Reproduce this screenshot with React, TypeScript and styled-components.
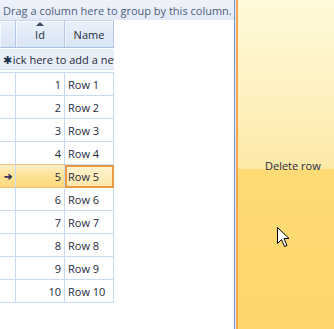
import { createGlobalStyle } from "styled-components";
import styled from "styled-components";

const GlobalStyle = createGlobalStyle`
  html, body {
    margin: 0;
    padding: 0;
    background: #ffffff;
  }

  body {
    font-family: "Open Sans", "Noto Sans", sans-serif;
    font-size: 11px;
    color: #1e2a3c;
  }
`;

export const Screen = styled.div`
  display: flex;
  width: 334px;
  height: 329px;
  overflow: hidden;
`;

export const GridArea = styled.div`
  width: 234px;
  display: flex;
  flex-direction: column;
  background: #ffffff;
`;

export const GroupPanel = styled.div`
  height: 20px;
  display: flex;
  align-items: center;
  padding-left: 3px;
  background: linear-gradient(#eef2fa, #e3eaf6);
  color: #4d5f7f;
  white-space: nowrap;
  overflow: hidden;
`;

export const Table = styled.div`
  display: grid;
  grid-template-columns: 16px 49px 49px;
  width: 114px;
`;

export const HeaderCell = styled.div`
  position: relative;
  height: 28px;
  box-sizing: border-box;
  display: flex;
  align-items: center;
  justify-content: center;
  padding-top: 1px;
  background: linear-gradient(#e9f0fa, #d9e5f5);
  border-right: 1px solid #b3c8e6;
  border-bottom: 1px solid #a7bfe2;
  border-top: 1px solid #c9d8ee;
  box-shadow: inset 1px 1px 0 #f6f9fe;
  color: #1e2a3c;
`;

export const SortArrow = styled.span`
  position: absolute;
  top: 1px;
  left: 50%;
  transform: translateX(-50%);
  width: 0;
  height: 0;
  border-left: 4px solid transparent;
  border-right: 4px solid transparent;
  border-bottom: 4px solid #3b4a6b;
`;

export const NewRow = styled.div`
  grid-column: 1 / 4;
  position: relative;
  height: 21px;
  margin-top: 1px;
  box-sizing: border-box;
  display: flex;
  align-items: center;
  padding-left: 3px;
  background: #e8eef8;
  border-bottom: 1px solid #d8e3f3;
  color: #1e2a3c;
  white-space: nowrap;
  overflow: hidden;
`;

export const NewRowStar = styled.span`
  position: absolute;
  left: 2px;
  top: 3px;
  padding: 0 1px;
  background: #e8eef8;
  font-size: 11px;
  color: #20304e;
`;

export const Gap = styled.div`
  grid-column: 1 / 4;
  height: 2px;
  border-bottom: 1px solid #c9daf0;
`;

export const Cell = styled.div<{ $align?: string; $current?: boolean; $selected?: boolean }>`
  height: 23px;
  box-sizing: border-box;
  display: flex;
  align-items: center;
  justify-content: ${(p) => (p.$align === "right" ? "flex-end" : "flex-start")};
  padding: 0 3px;
  border-right: 1px solid #c9daf0;
  border-bottom: 1px solid #c9daf0;
  background: ${(p) =>
    p.$current
      ? "linear-gradient(#fff4d2, #fde7a8)"
      : p.$selected
      ? "linear-gradient(#fff0c8 0%, #fde39a 45%, #fdd77a 100%)"
      : "#ffffff"};
  ${(p) =>
    p.$current
      ? "outline: 2px solid #e99a45; outline-offset: -2px; border-bottom-color: #f1c27e;"
      : p.$selected
      ? "border-bottom-color: #f1c27e; border-top: 1px solid #f1c27e; margin-top: -1px; height: 24px;"
      : ""}
  color: #1e2a3c;
`;

export const Indicator = styled.span`
  font-size: 10px;
  font-weight: bold;
  color: #3b3560;
  margin-left: 1px;
`;

export const Splitter = styled.div`
  width: 4px;
  display: flex;
`;

export const SplitLine = styled.div<{ $color: string; $w: number }>`
  width: ${(p) => p.$w}px;
  background: ${(p) => p.$color};
`;

export const DeletePanel = styled.div`
  position: relative;
  flex: 1;
  display: flex;
  flex-direction: column;
  background: linear-gradient(
    #fffad9 0%,
    #fef1c0 30%,
    #fde8a6 51.2%,
    #fedb74 51.5%,
    #fed66c 100%
  );
`;

export const DeleteLabel = styled.div`
  margin-top: 158px;
  padding-left: 27px;
  color: #1e2a3c;
`;

export const Cursor = styled.svg`
  position: absolute;
  left: 39px;
  top: 227px;
`;

const rows = Array.from({ length: 10 }, (_, i) => i + 1);

const App = () => {
  return (
    <>
      <GlobalStyle />
      <Screen>
        <GridArea>
          <GroupPanel>Drag a column here to group by this column.</GroupPanel>
          <Table>
            <HeaderCell />
            <HeaderCell>
              <SortArrow />
              Id
            </HeaderCell>
            <HeaderCell>Name</HeaderCell>
            <NewRow>
              <NewRowStar>✱</NewRowStar>
              Click here to add a new row
            </NewRow>
            <Gap />
            {rows.map((n) => (
              <>
                <Cell key={`i${n}`} $selected={n === 5}>
                  {n === 5 && <Indicator>➔</Indicator>}
                </Cell>
                <Cell key={`d${n}`} $align="right" $selected={n === 5}>
                  {n}
                </Cell>
                <Cell key={`n${n}`} $current={n === 5}>
                  Row {n}
                </Cell>
              </>
            ))}
          </Table>
        </GridArea>
        <Splitter>
          <SplitLine $color="#7496d4" $w={1} />
          <SplitLine $color="#dfe8f6" $w={1} />
          <SplitLine $color="#f4a650" $w={2} />
        </Splitter>
        <DeletePanel>
          <DeleteLabel>Delete row</DeleteLabel>
          <Cursor width="13" height="21" viewBox="0 0 13 21">
            <path
              d="M0.5 0.5 L0.5 16.5 L4.5 12.5 L7.5 19.5 L10 18.5 L7 11.5 L12 11.5 Z"
              fill="#ffffff"
              stroke="#000000"
              strokeWidth="1"
            />
          </Cursor>
        </DeletePanel>
      </Screen>
    </>
  );
};

export default App;
